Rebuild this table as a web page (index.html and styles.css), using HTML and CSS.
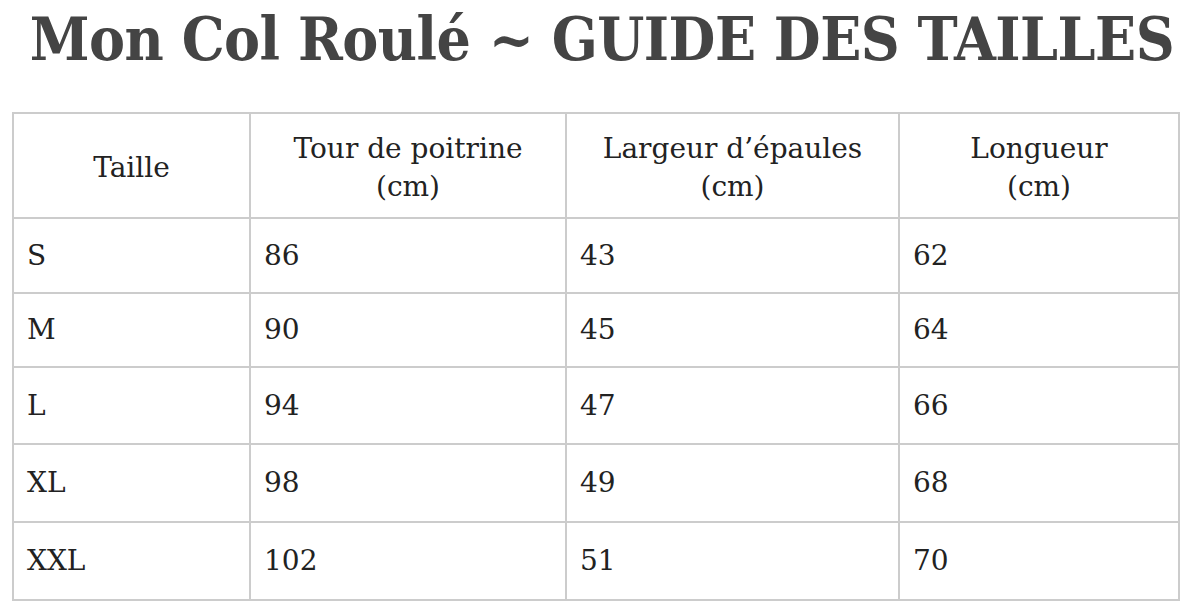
FILE: index.html
```html
<!DOCTYPE html>
<html lang="fr">
<head>
<meta charset="utf-8">
<title>Mon Col Roulé ~ Guide des tailles</title>
<link rel="stylesheet" href="styles.css">
</head>
<body>
<h1 class="title">Mon Col Roulé ~ GUIDE DES TAILLES</h1>
<table class="sizes">
  <colgroup>
    <col class="c1"><col class="c2"><col class="c3"><col class="c4">
  </colgroup>
  <thead>
    <tr>
      <th>Taille</th>
      <th>Tour de poitrine<br>(cm)</th>
      <th>Largeur d’épaules<br>(cm)</th>
      <th>Longueur<br>(cm)</th>
    </tr>
  </thead>
  <tbody>
    <tr class="r1"><td>S</td><td>86</td><td>43</td><td>62</td></tr>
    <tr class="r2"><td>M</td><td>90</td><td>45</td><td>64</td></tr>
    <tr class="r3"><td>L</td><td>94</td><td>47</td><td>66</td></tr>
    <tr class="r4"><td>XL</td><td>98</td><td>49</td><td>68</td></tr>
    <tr class="r5"><td>XXL</td><td>102</td><td>51</td><td>70</td></tr>
  </tbody>
</table>
</body>
</html>
```
FILE: styles.css
```css
html, body {
  margin: 0;
  padding: 0;
  background: #fff;
}
body {
  font-family: "DejaVu Serif", "Liberation Serif", serif;
  color: #222;
}
.title {
  margin: 0;
  padding-top: 2px;
  height: 112px;
  box-sizing: border-box;
  text-align: center;
  font-family: "DejaVu Serif Condensed", "DejaVu Serif", serif;
  font-stretch: condensed;
  font-weight: bold;
  font-size: 60px;
  line-height: 74px;
  color: #444;
  letter-spacing: -0.5px;
  white-space: nowrap;
}
.sizes {
  margin-left: 12px;
  width: 1166px;
  border-collapse: collapse;
  table-layout: fixed;
  font-size: 28px;
}
.c1 { width: 237px; }
.c2 { width: 316px; }
.c3 { width: 333px; }
.c4 { width: 280px; }
.sizes th,
.sizes td {
  border: 2px solid #cccccc;
  padding: 0 13px;
}
.sizes th {
  font-weight: normal;
  text-align: center;
  height: 99px;
  line-height: 38px;
  padding-top: 4px;
  padding-bottom: 0;
}
.sizes td {
  text-align: left;
  line-height: 38px;
}
.r1 td { height: 73px; }
.r2 td { height: 72px; }
.r3 td { height: 75px; }
.r4 td { height: 76px; }
.r5 td { height: 76px; }
```
